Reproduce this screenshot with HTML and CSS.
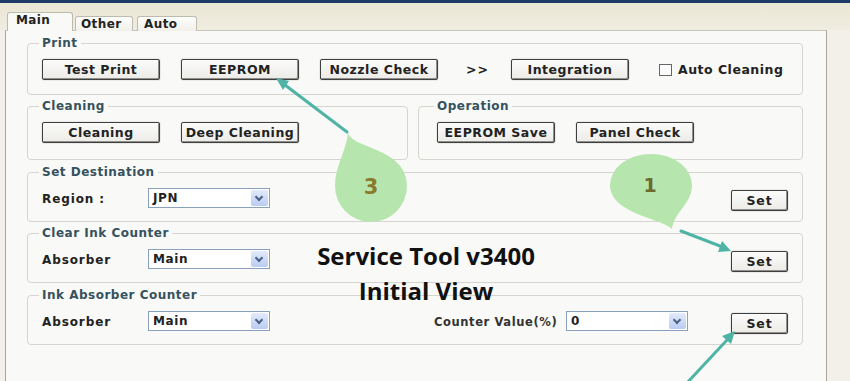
FILE: index.html
```html
<!DOCTYPE html>
<html lang="en">
<head>
    <meta charset="UTF-8">
    <title>Service Tool v3400</title>
    <link rel="stylesheet" href="styles.css">
</head>
<body>
    <div class="window">
        <div class="tabs">
            <div class="tab tab-active">Main</div>
            <div class="tab tab-other">Other</div>
            <div class="tab tab-auto">Auto</div>
        </div>

        <div class="panel">
            <fieldset class="group group-print">
                <legend>Print</legend>
                <div class="row">
                    <button class="btn">Test Print</button>
                    <button class="btn">EEPROM</button>
                    <button class="btn">Nozzle Check</button>
                    <span class="next">&gt;&gt;</span>
                    <button class="btn">Integration</button>
                    <label class="check"><span class="box"></span>Auto Cleaning</label>
                </div>
            </fieldset>

            <div class="split">
                <fieldset class="group group-cleaning">
                    <legend>Cleaning</legend>
                    <div class="row">
                        <button class="btn">Cleaning</button>
                        <button class="btn">Deep Cleaning</button>
                    </div>
                </fieldset>
                <fieldset class="group group-operation">
                    <legend>Operation</legend>
                    <div class="row">
                        <button class="btn">EEPROM Save</button>
                        <button class="btn">Panel Check</button>
                    </div>
                </fieldset>
            </div>

            <fieldset class="group group-line g-dest">
                <legend>Set Destination</legend>
                <div class="row">
                    <span class="field-label">Region :</span>
                    <div class="select"><span>JPN</span><i class="drop"></i></div>
                    <button class="btn btn-set">Set</button>
                </div>
            </fieldset>

            <fieldset class="group group-line g-clear">
                <legend>Clear Ink Counter</legend>
                <div class="row">
                    <span class="field-label">Absorber</span>
                    <div class="select"><span>Main</span><i class="drop"></i></div>
                    <button class="btn btn-set">Set</button>
                </div>
            </fieldset>

            <fieldset class="group group-line g-absorber">
                <legend>Ink Absorber Counter</legend>
                <div class="row">
                    <span class="field-label">Absorber</span>
                    <div class="select"><span>Main</span><i class="drop"></i></div>
                    <span class="counter-label">Counter Value(%)</span>
                    <div class="select select-counter"><span>0</span><i class="drop"></i></div>
                    <button class="btn btn-set">Set</button>
                </div>
            </fieldset>
        </div>

        <div class="caption">Service Tool v3400<br>Initial View</div>

        <!-- annotation balloons and arrows drawn over the screenshot -->
        <svg class="notes" width="850" height="381" viewBox="0 0 850 381">
            <defs>
                <filter id="soft" x="-10%" y="-10%" width="120%" height="120%">
                    <feGaussianBlur stdDeviation="0.7"/>
                </filter>
            </defs>
            <g fill="#b6e5ae" filter="url(#soft)">
                <path d="M348,133 C353,149 407,148 407,186 A36,36 0 1,1 335,186 C335,166 346,152 348,133 Z"/>
                <path d="M672,229 C664,219 610,214 610,185 A41,31 0 1,1 692,185 C692,204 674,212 672,229 Z"/>
            </g>
            <text class="num num-3" x="371" y="194">3</text>
            <text class="num num-1" x="650" y="192">1</text>
            <g stroke="#4fb4a6" stroke-width="3" stroke-linecap="round" fill="none">
                <line x1="347" y1="132" x2="285" y2="85"/>
                <line x1="681" y1="231" x2="720" y2="246"/>
                <line x1="686" y1="384" x2="727" y2="340"/>
            </g>
            <g fill="#4fb4a6">
                <polygon points="276,78 289,81 283,90"/>
                <polygon points="731,251 718,252 722,241"/>
                <polygon points="735,331 731,344 722,336"/>
            </g>
        </svg>
    </div>
</body>
</html>
```

FILE: styles.css
```css
body {
    margin: 0;
    background-color: #f2f0e9;
    font-family: "DejaVu Sans", Verdana, sans-serif;
    color: #222;
}
.window {
    position: relative;
    width: 850px;
    height: 381px;
    overflow: hidden;
    border-top: 3px solid #1f3c68;
    box-sizing: border-box;
}
.tabs {
    display: flex;
    align-items: flex-end;
    height: 27px;
    padding-left: 7px;
    background: linear-gradient(#ebe7d5, #efece1);
}
.tab {
    box-sizing: border-box;
    height: 15px;
    margin-bottom: -1px;
    padding-left: 6px;
    border: 1px solid #bdbbad;
    border-bottom: none;
    border-radius: 3px 3px 0 0;
    background: linear-gradient(#fdfdfb, #f1f0ea);
    font-size: 12px;
    font-weight: bold;
    line-height: 14px;
    letter-spacing: 0.4px;
}
.tab-active {
    width: 66px;
    height: 19px;
    padding-left: 8px;
    background: #f9f9f7;
    position: relative;
    z-index: 1;
}
.tab-other {
    width: 58px;
    margin-left: 2px;
    padding-left: 5px;
}
.tab-auto {
    width: 60px;
    margin-left: 4px;
}
.panel {
    box-sizing: border-box;
    width: 822px;
    height: 352px;
    margin-left: 5px;
    padding: 5px 23px 0 21px;
    background-color: #f9f9f7;
    border: 1px solid #a9a89f;
    border-top-color: #c7c5b9;
    border-bottom: none;
    display: flex;
    flex-direction: column;
}
.group {
    margin: 0;
    padding: 9px 14px 11px;
    border: 1px solid #d5d4ce;
    border-radius: 4px;
    min-width: 0;
}
.group legend {
    margin-left: -3px;
    padding: 0 3px;
    font-size: 12px;
    font-weight: bold;
    line-height: 14px;
    letter-spacing: 0.5px;
    color: #35525e;
}
.group-print {
    padding-bottom: 14px;
}
.split {
    display: flex;
    gap: 10px;
    margin-top: 4px;
}
.group-cleaning {
    flex: 0 0 381px;
    box-sizing: border-box;
    padding-bottom: 16px;
}
.group-operation {
    flex: 1;
    padding-left: 18px;
    padding-bottom: 16px;
}
.g-dest {
    margin-top: 5px;
}
.g-clear {
    margin-top: 4px;
}
.g-absorber {
    margin-top: 5px;
}
.row {
    display: flex;
    align-items: center;
    height: 21px;
}
.group-line .row {
    height: 22px;
}
.btn {
    box-sizing: border-box;
    width: 118px;
    height: 21px;
    margin-right: 21px;
    padding: 0;
    border: 1px solid #3f3f3f;
    border-radius: 2px;
    background: linear-gradient(#fbfbfa, #ecebe7);
    box-shadow: inset -1px -1px 0 #8f8f8b, 0 0 1px #666;
    font-family: inherit;
    font-size: 12.5px;
    font-weight: bold;
    letter-spacing: 0.5px;
    color: #222;
    white-space: nowrap;
}
.next {
    margin: 0 22px 0 7px;
    font-size: 12.5px;
    font-weight: bold;
    letter-spacing: 1px;
}
.check {
    display: flex;
    align-items: center;
    gap: 6px;
    margin-left: 9px;
    font-size: 12.5px;
    font-weight: bold;
    letter-spacing: 0.5px;
}
.box {
    width: 11px;
    height: 10px;
    border: 1px solid #666;
    background: #fbfbfb;
}
.field-label {
    width: 106px;
    font-size: 12px;
    font-weight: bold;
    letter-spacing: 0.9px;
}
.select {
    box-sizing: border-box;
    display: flex;
    justify-content: space-between;
    align-items: center;
    width: 122px;
    height: 20px;
    margin-top: -2px;
    padding: 1px 1px 1px 4px;
    border: 1px solid #8aa1bd;
    background: #fff;
    font-size: 12px;
    font-weight: bold;
    letter-spacing: 0.6px;
}
.drop {
    position: relative;
    width: 17px;
    height: 16px;
    border-radius: 2px;
    background: linear-gradient(#e3ebfb, #b9ccf1);
}
.drop::after {
    content: "";
    position: absolute;
    left: 5px;
    top: 4px;
    width: 4px;
    height: 4px;
    border-right: 2px solid #4c5f86;
    border-bottom: 2px solid #4c5f86;
    transform: rotate(45deg);
}
.btn-set {
    width: 57px;
    margin: 2px 0 0 auto;
    letter-spacing: 0.8px;
}
.counter-label {
    margin-left: 164px;
    width: 130px;
    font-size: 11.5px;
    font-weight: bold;
    letter-spacing: 0.6px;
    color: #333;
    white-space: nowrap;
}
.select-counter {
    margin-left: 2px;
}
.caption {
    position: absolute;
    left: 296px;
    top: 235px;
    width: 260px;
    text-align: center;
    font-family: "Open Sans", sans-serif;
    font-size: 24px;
    font-weight: bold;
    line-height: 35px;
    color: #111;
}
.notes {
    position: absolute;
    left: 0;
    top: -3px;
    pointer-events: none;
}
.num {
    font-family: "DejaVu Sans", sans-serif;
    font-weight: bold;
    text-anchor: middle;
}
.num-3 {
    font-size: 21px;
    fill: #8a7a2c;
}
.num-1 {
    font-size: 19px;
    fill: #6c6a2c;
}
```
